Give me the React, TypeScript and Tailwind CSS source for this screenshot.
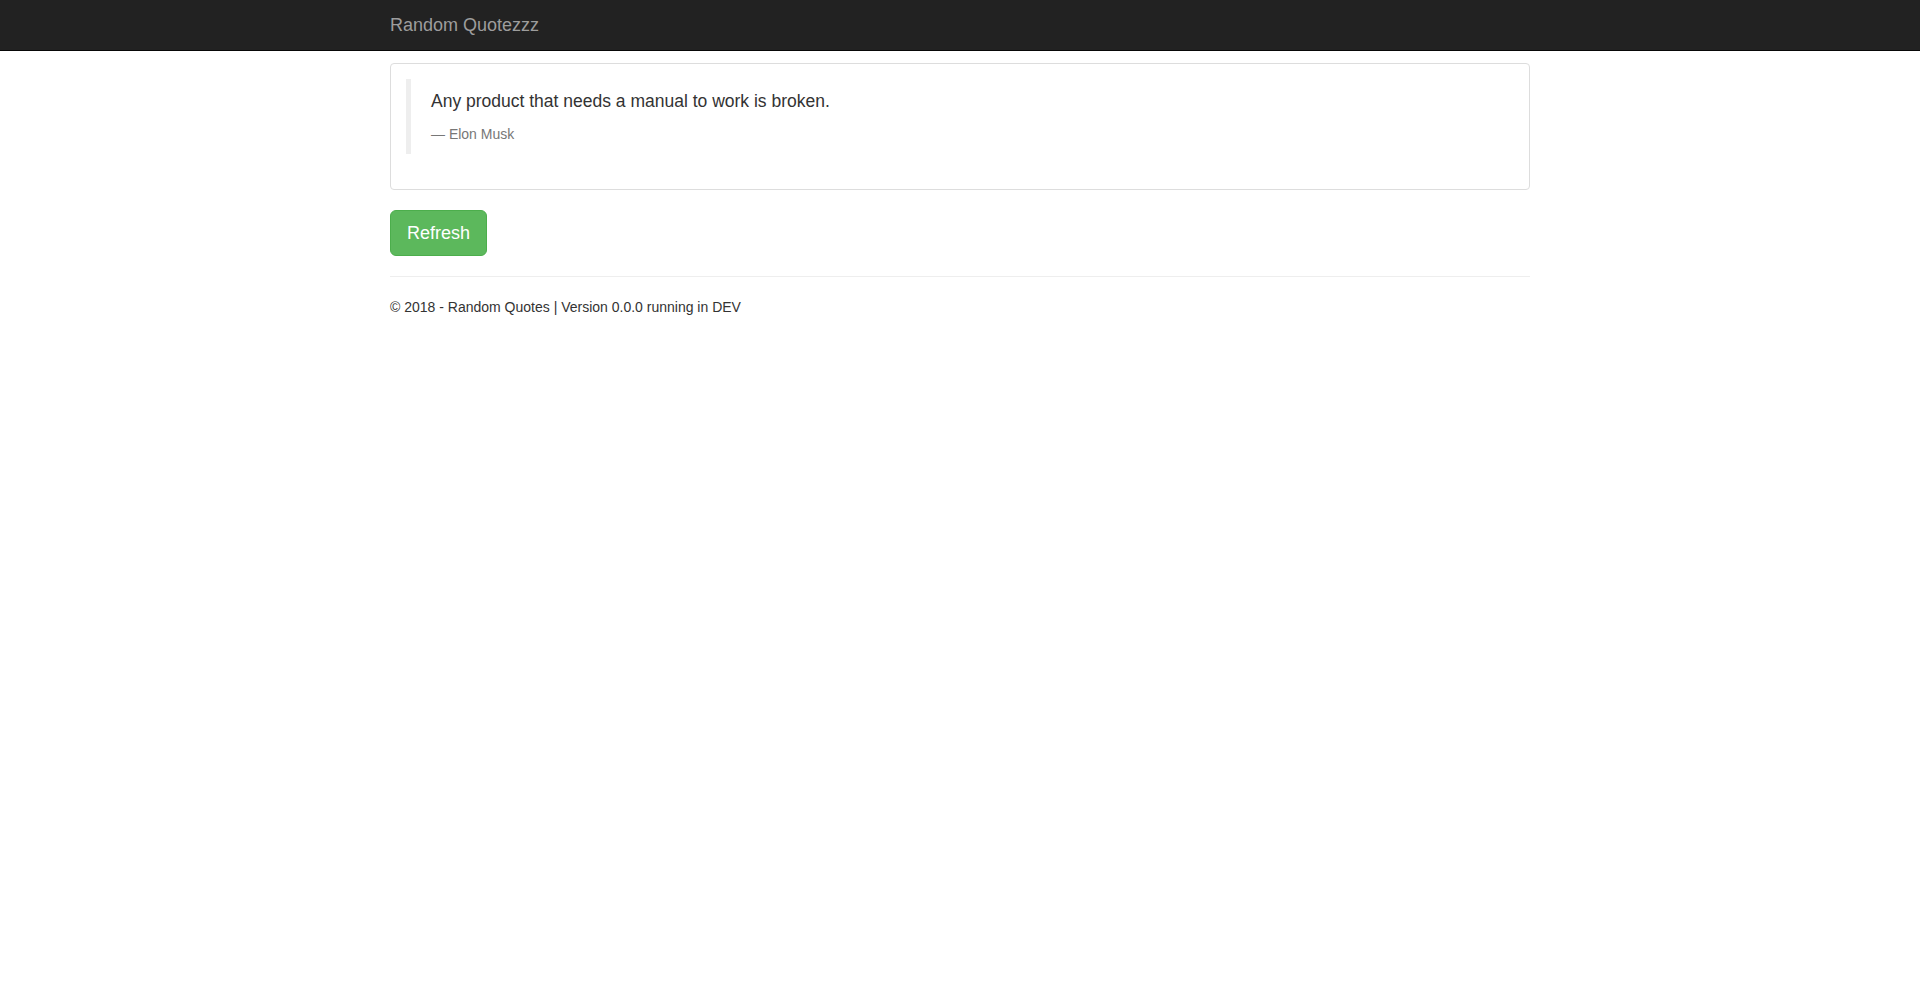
export default function App() {
  return (
    <div className="min-h-[995px] bg-white text-[#333] text-[14px] leading-[20px]" style={{ fontFamily: '"Liberation Sans", Arial, Helvetica, sans-serif' }}>
      <nav className="h-[51px] bg-[#222] border-b border-[#080808]">
        <div className="w-[1170px] mx-auto px-[15px]">
          <a className="block w-fit py-[15px] text-[18px] leading-[20px] text-[#9d9d9d]" href="#">Random Quotezzz</a>
        </div>
      </nav>
      <div className="w-[1170px] mx-auto px-[15px] pt-[12px]">
        <div className="border border-[#ddd] rounded-[4px] p-[15px] mb-[20px]">
          <blockquote className="border-l-[5px] border-[#eee] py-[10px] px-[20px] mb-[20px]">
            <p className="text-[17.5px] leading-[25px] mb-[10px]">Any product that needs a manual to work is broken.</p>
            <footer className="text-[14px] leading-[20px] text-[#777]">— Elon Musk</footer>
          </blockquote>
        </div>
        <button className="block bg-[#5cb85c] border border-[#4cae4c] text-white text-[18px] leading-[24px] px-[16px] py-[10px] rounded-[6px]">Refresh</button>
        <hr className="my-[20px] border-0 border-t border-[#eee]" />
        <footer>
          <p>© 2018 - Random Quotes | Version 0.0.0 running in DEV</p>
        </footer>
      </div>
    </div>
  );
}
